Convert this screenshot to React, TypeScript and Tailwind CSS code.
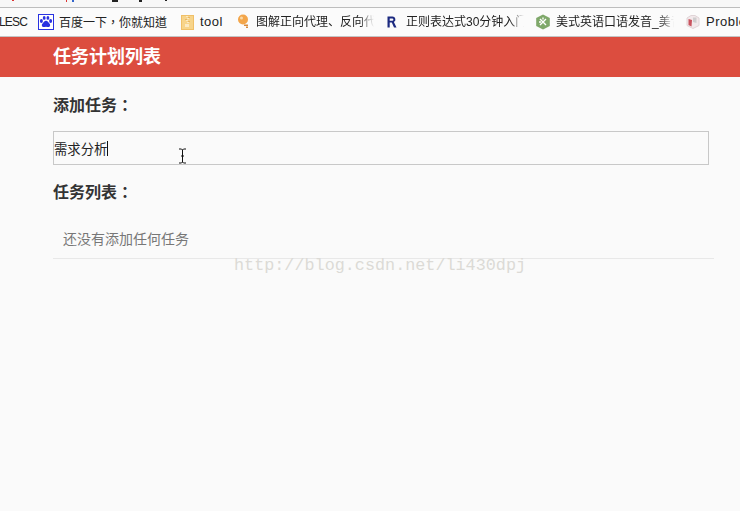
import { useState } from 'react';

const cjk = 'font-["Liberation_Sans","Noto_Sans_CJK_SC",sans-serif]';
const fade = '[mask-image:linear-gradient(to_right,black_88%,transparent)]';

function BaiduIcon() {
  return (
    <svg width="16" height="16" viewBox="0 0 16 16" className="shrink-0">
      <rect x="0.5" y="0.5" width="15" height="15" fill="#fff" stroke="#2932e1" />
      <g fill="#2932e1">
        <ellipse cx="3.4" cy="7" rx="1.5" ry="1.9" />
        <ellipse cx="6.2" cy="3.9" rx="1.4" ry="1.9" />
        <ellipse cx="9.9" cy="3.9" rx="1.4" ry="1.9" />
        <ellipse cx="12.6" cy="7" rx="1.5" ry="1.9" />
        <path d="M8 6.8c1.8 0 2.2 1.6 3.4 2.6 1.3 1.1.9 3.6-1.2 3.6-.9 0-1.4-.3-2.2-.3s-1.3.3-2.2.3c-2.1 0-2.5-2.5-1.2-3.6C5.8 8.4 6.2 6.8 8 6.8z" />
      </g>
    </svg>
  );
}

function ToolIcon() {
  return (
    <svg width="13" height="15" viewBox="0 0 13 15" className="shrink-0">
      <rect x="0.5" y="0.5" width="12" height="14" fill="#f7d48a" stroke="#f0c068" />
      <path d="M5 1h2v1H5zM6 3h2v1H6zM5 5h2v1H5zM6 7h2v1H6zM4 9h4v3H4z" fill="#fbeac4" />
      <path d="M7 2h2v1H7zM4 4h2v1H4zM7 6h2v1H7z" fill="#e9b765" />
    </svg>
  );
}

function BulbIcon() {
  return (
    <svg width="14" height="16" viewBox="0 0 14 16" className="shrink-0">
      <circle cx="6" cy="5.5" r="5" fill="#f3a64b" />
      <circle cx="4.5" cy="4" r="1.5" fill="#fbd9a6" />
      <path d="M7 10.5h4V12H7zM9 12.5h2V14H9z" fill="#d98a3a" />
    </svg>
  );
}

function RIcon() {
  return (
    <svg width="10" height="12" viewBox="0 0 10 12" className="shrink-0">
      <path d="M.5.5h5a3 3 0 0 1 1.4 5.6L9.5 11.5H7L4.8 6.6H2.7v4.900H.5zM2.700 2.400v2.400h2.500a1.200 1.200 0 0 0 0-2.400z" fill="#1c2a80" />
    </svg>
  );
}

function HexIcon() {
  return (
    <svg width="16" height="16" viewBox="0 0 16 16" className="shrink-0">
      <path d="M8 .5 14.800 4v8L8 15.500 1.200 12V4z" fill="#7fa86a" />
      <path d="M5 5l6 6M11 5l-6 6M8 3.500v2M4 8h2" stroke="#fff" strokeWidth="1.4" />
    </svg>
  );
}

function ProblemIcon() {
  return (
    <svg width="16" height="16" viewBox="0 0 16 16" className="shrink-0">
      <path d="M2 4 6 1.500h4L14 4v7.500L8 14.500 2 11.500z" fill="#f2e9eb" stroke="#e0d4d7" />
      <path d="M3.500 5 7 6l-.5 6.500-3-1.500z" fill="#c9545f" />
      <path d="M8 3.500h3.500V9L8 8z" fill="#cfcdce" />
    </svg>
  );
}

const bookmarks = [
  { icon: <BaiduIcon />, label: '百度一下，你就知道', width: 'w-[143px]', gap: 'gap-[5px]', text: 'text-[12px] font-["Noto_Sans_CJK_TC",sans-serif]' },
  { icon: <ToolIcon />, label: 'tool', width: 'w-[56px]', gap: 'gap-[6px]', text: 'text-[13px] tracking-[0.5px]' },
  { icon: <BulbIcon />, label: '图解正向代理、反向代', width: 'w-[150px]', gap: 'gap-[5px]', text: 'text-[12px] w-[118px] overflow-hidden ' + fade },
  { icon: <RIcon />, label: '正则表达式30分钟入门', width: 'w-[148px]', gap: 'gap-[9px]', text: 'text-[12px] w-[118px] overflow-hidden ' + fade },
  { icon: <HexIcon />, label: '美式英语口语发音_美音', width: 'w-[150px]', gap: 'gap-[5px]', text: 'text-[12px] w-[118px] overflow-hidden ' + fade },
  { icon: <ProblemIcon />, label: 'Problems', width: 'w-[60px]', gap: 'gap-[5px]', text: 'text-[13px] tracking-[0.5px]' },
];

export default function App() {
  const [task, setTask] = useState('需求分析');

  return (
    <div className={`relative h-[511px] w-[740px] overflow-hidden bg-[#fafafa] ${cjk}`}>
      {/* Browser chrome, address bar text is cut off at the top edge */}
      <div className="h-[8px] border-b border-[#bdbdbd] bg-[#f7f7f7]">
        <svg width="240" height="2" viewBox="0 0 240 2" className="block">
          <path d="M12 0h2v1h-2zM66 0h1v2h-1z" fill="#d33" />
          <path d="M72 0h2v2h-2z" fill="#36c" />
          <path d="M112 0h6v2h-6zM139 0h3v2h-3zM165 0h2v1h-2z" fill="#222" />
        </svg>
      </div>
      <div className="flex h-[29px] items-center overflow-hidden whitespace-nowrap border-b border-[#c4c4c4] bg-[#fbfbfb] text-[#222]">
        <span className="-ml-px w-[39px] shrink-0 text-[12px] tracking-[-0.8px]">LESC</span>
        {bookmarks.map((b) => (
          <div key={b.label} className={`flex shrink-0 items-center ${b.width} ${b.gap}`}>
            {b.icon}
            <span className={b.text}>{b.label}</span>
          </div>
        ))}
      </div>

      {/* App header */}
      <div className="flex h-[40px] items-center bg-[#dc4d3f] pl-[53px] pt-px text-[18px] font-bold text-white">
        任务计划列表
      </div>

      {/* Content */}
      <div className="pl-[53px] pr-[26px] pt-[17px] text-[#333]">
        <h2 className="h-[22px] text-[16px] font-bold leading-[24px]">
          添加任务<span className='font-["Noto_Sans_CJK_TC",sans-serif] leading-none'>：</span>
        </h2>
        <input
          value={task}
          onChange={(e) => setTask(e.target.value)}
          className="mt-[15px] block h-[34px] w-[656px] border border-[#c8c8c8] bg-transparent px-0 text-[13.33px] text-[#222] outline-none"
        />
        <h2 className="mt-[16px] h-[22px] text-[16px] font-bold leading-[24px]">
          任务列表<span className='font-["Noto_Sans_CJK_TC",sans-serif] leading-none'>：</span>
        </h2>
        <div className="mt-[16px] flex h-[40px] w-[661px] items-center border-b border-[#e8e8e8] pl-[10px] pt-px text-[14px] text-[#777]">
          还没有添加任何任务
        </div>
      </div>

      {/* Text caret and I-beam pointer over the input */}
      <div className="absolute left-[107px] top-[141px] h-[15px] w-px bg-[#111]" />
      <svg width="9" height="16" viewBox="0 0 9 16" className="absolute left-[178px] top-[148px]">
        <path d="M1 1h2.500L4.500 2l1-1H8M4.500 2v12M1 15h2.500l1-1 1 1H8M3 8h3" fill="none" stroke="#111" />
      </svg>

      {/* Watermark */}
      <div className='absolute left-[234px] top-[256px] font-["Liberation_Mono",monospace] text-[16.8px] leading-[20px] text-[#dcdad6]'>
        http://blog.csdn.net/li430dpj
      </div>
    </div>
  );
}
